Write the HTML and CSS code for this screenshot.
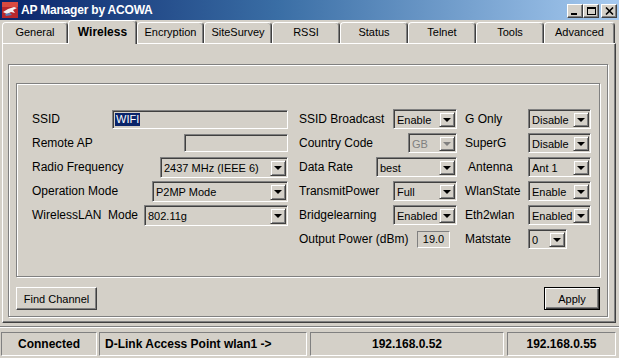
FILE: index.html
```html
<!DOCTYPE html>
<html>
<head>
<meta charset="utf-8">
<title>AP Manager by ACOWA</title>
<link rel="stylesheet" href="styles.css">
</head>
<body>
<div class="title">
	<svg class="ico" width="16" height="16" viewBox="0 0 16 16">
		<rect x="0" y="0" width="16" height="16" fill="#b8282c"/>
		<rect x="0" y="0" width="16" height="5" fill="#d84a40"/>
		<path d="M1 10 L6 7 L12 5 L15 6 L11 8 L13 11 L9 10 L5 12 Z" fill="#f2f2f2"/>
		<path d="M3 12 L8 11 L10 13 L4 14 Z" fill="#5a7fb8"/>
	</svg>
	<h1>AP Manager by ACOWA</h1>
	<div class="wbtns">
		<div class="wbtn"><span class="g-min"></span></div>
		<div class="wbtn"><span class="g-max"></span></div>
		<div class="wbtn wclose">
			<svg width="9" height="8" viewBox="0 0 9 8"><path d="M1 0.5 L8 7.5 M8 0.5 L1 7.5" stroke="#000" stroke-width="1.6"/></svg>
		</div>
	</div>
</div>

<ul class="tabs">
	<li class="t66">General</li>
	<li class="t69 on">Wireless</li>
	<li class="t67">Encryption</li>
	<li class="t68">SiteSurvey</li>
	<li class="t68">RSSI</li>
	<li class="t68">Status</li>
	<li class="t68">Telnet</li>
	<li class="t68">Tools</li>
	<li class="t71">Advanced</li>
</ul>

<div class="panel">
	<div class="outer">
		<div class="inner">
			<!-- left column -->
			<div class="col col-l">
				<div class="row">
					<label>SSID</label>
					<div class="txt w176"><span class="sel">WIFI</span></div>
				</div>
				<div class="row">
					<label>Remote AP</label>
					<div class="txt w104 h18"></div>
				</div>
				<div class="row">
					<label>Radio Frequency</label>
					<div class="combo w128"><span class="val">2437 MHz (IEEE 6)</span><span class="arr"></span></div>
				</div>
				<div class="row">
					<label>Operation Mode</label>
					<div class="combo w136"><span class="val">P2MP Mode</span><span class="arr"></span></div>
				</div>
				<div class="row">
					<label>WirelessLAN&nbsp; Mode</label>
					<div class="combo w144"><span class="val">802.11g</span><span class="arr"></span></div>
				</div>
			</div>
			<!-- middle column -->
			<div class="col col-m">
				<div class="row">
					<label>SSID Broadcast</label>
					<div class="combo w64 sm"><span class="val">Enable</span><span class="arr"></span></div>
				</div>
				<div class="row">
					<label>Country Code</label>
					<div class="combo w49 sm off"><span class="val">GB</span><span class="arr"></span></div>
				</div>
				<div class="row">
					<label>Data Rate</label>
					<div class="combo w81 sm"><span class="val">best</span><span class="arr"></span></div>
				</div>
				<div class="row">
					<label>TransmitPower</label>
					<div class="combo w64 sm"><span class="val">Full</span><span class="arr"></span></div>
				</div>
				<div class="row">
					<label>Bridgelearning</label>
					<div class="combo w64 sm"><span class="val">Enabled</span><span class="arr"></span></div>
				</div>
				<div class="row">
					<label>Output Power (dBm)</label>
					<div class="num">19.0</div>
				</div>
			</div>
			<!-- right column -->
			<div class="col col-r">
				<div class="row">
					<label>G Only</label>
					<div class="combo w63 sm"><span class="val">Disable</span><span class="arr"></span></div>
				</div>
				<div class="row">
					<label>SuperG</label>
					<div class="combo w63 sm"><span class="val">Disable</span><span class="arr"></span></div>
				</div>
				<div class="row">
					<label class="ind">Antenna</label>
					<div class="combo w63 sm"><span class="val">Ant 1</span><span class="arr"></span></div>
				</div>
				<div class="row">
					<label>WlanState</label>
					<div class="combo w63 sm"><span class="val">Enable</span><span class="arr"></span></div>
				</div>
				<div class="row">
					<label>Eth2wlan</label>
					<div class="combo w63 sm"><span class="val">Enabled</span><span class="arr"></span></div>
				</div>
				<div class="row">
					<label>Matstate</label>
					<div class="combo w39 sm"><span class="val">0</span><span class="arr"></span></div>
				</div>
			</div>
		</div>
		<div class="btns">
			<a class="btn find" href="###">Find Channel</a>
			<a class="btn apply" href="###">Apply</a>
		</div>
	</div>
</div>

<div class="status">
	<div class="cell s1">Connected</div>
	<div class="cell s2">D-Link Access Point wlan1 -&gt;</div>
	<div class="cell s3">192.168.0.52</div>
	<div class="cell s4">192.168.0.55</div>
</div>
</body>
</html>
```

FILE: styles.css
```css
*{margin:0;padding:0;box-sizing:border-box;}
li{list-style:none;}
a{text-decoration:none;color:#000;}
body{width:619px;height:358px;overflow:hidden;background:#d4d0c8;color:#000;font:12px "Liberation Sans",Arial,sans-serif;}

/* title bar */
.title{height:20px;display:flex;align-items:center;padding:0 2px;background:linear-gradient(to right,#0a246a,#3a6ea5 45%,#a6caf0);}
.title .ico{margin-right:3px;flex:none;}
.title h1{flex:1;color:#fff;font:bold 12px "Liberation Sans",Arial,sans-serif;letter-spacing:-0.2px;}
.wbtns{display:flex;margin-top:2px;}
.wbtn{width:16px;height:14px;display:flex;align-items:center;justify-content:center;background:#d4d0c8;border:1px solid;border-color:#fff #404040 #404040 #fff;box-shadow:inset -1px -1px #808080;}
.wclose{margin-left:2px;}
.g-min{width:6px;height:2px;background:#000;margin-top:6px;margin-right:2px;}
.g-max{width:9px;height:8px;border:1px solid #000;border-top-width:2px;}

/* tabs */
.tabs{display:flex;align-items:flex-end;height:23px;padding-left:2px;}
.tabs li{height:21px;text-align:center;font-size:11px;line-height:19px;background:#d4d0c8;border:1px solid;border-bottom:none;border-color:#fff #404040 transparent #fff;border-radius:4px 4px 0 0;box-shadow:inset -1px 0 #808080;}
.tabs .on{height:24px;margin-bottom:-1px;position:relative;z-index:1;font-size:12px;font-weight:bold;line-height:22px;}
.t66{width:66px;}
.t67{width:67px;}
.t68{width:68px;}
.t69{width:69px;}
.t71{width:71px;}

/* tab page */
.panel{margin-left:2px;width:614px;height:280px;padding:20px 0 0 5px;border:1px solid;border-color:#fff #404040 #404040 #fff;box-shadow:inset -1px -1px #808080;}
.outer{width:600px;height:253px;padding:18px 7px 0;border:1px solid #808080;box-shadow:inset 1px 1px #fff,1px 1px #fff;}
.inner{display:flex;height:194px;padding:23px 0 0 15px;border:1px solid #808080;box-shadow:inset 1px 1px #fff,1px 1px #fff;}
.col-l{width:256px;margin-right:11px;}
.col-m{width:158px;margin-right:8px;}
.col-r{width:126px;}
.row{height:24px;display:flex;align-items:center;justify-content:space-between;}
.row label{white-space:nowrap;}
.col-r .row{justify-content:flex-start;}
.col-r label{width:63px;}
.col-r .ind{padding-left:3px;}

/* controls */
.txt,.combo,.num{display:flex;align-items:center;height:19px;background:#d4d0c8;border:1px solid;border-color:#808080 #fff #fff #808080;box-shadow:inset 1px 1px #404040;font-size:11px;}
.txt{padding-left:2px;}
.h18{height:18px;}
.sel{background:#0a246a;color:#fff;padding:0 1px;line-height:13px;}
.combo{height:21px;padding:2px 1px 1px 2px;}
.combo.sm{height:20px;}
.combo .val{flex:1;padding-left:1px;white-space:nowrap;overflow:hidden;}
.combo .arr{flex:none;width:16px;height:100%;display:flex;align-items:center;justify-content:center;border:1px solid;border-color:#d4d0c8 #404040 #404040 #d4d0c8;box-shadow:inset 1px 1px #fff,inset -1px -1px #808080;}
.combo .arr:after{content:"";border-top:4px solid #000;border-left:4px solid transparent;border-right:4px solid transparent;}
.combo.off .val{color:#808080;}
.combo.off .arr:after{border-top-color:#808080;}
.num{width:33px;height:17px;margin-right:7px;justify-content:center;box-shadow:none;}
.w39{width:39px;}
.w49{width:49px;}
.w63{width:63px;}
.w64{width:64px;}
.w81{width:81px;}
.w104{width:104px;}
.w128{width:128px;}
.w136{width:136px;}
.w144{width:144px;}
.w176{width:176px;}

/* buttons */
.btns{display:flex;justify-content:space-between;margin-top:10px;}
.btn{display:flex;align-items:center;justify-content:center;height:23px;font-size:11px;background:#d4d0c8;border:1px solid;border-color:#fff #404040 #404040 #fff;box-shadow:inset -1px -1px #808080;}
.find{width:81px;}
.apply{width:56px;border-color:#000;box-shadow:inset 1px 1px #fff,inset -1px -1px #404040,inset -2px -2px #808080;}

/* status bar */
.status{display:flex;height:32px;margin-top:3px;padding:5px 0 0 1px;border-top:1px solid #808080;box-shadow:inset 0 1px #fff;}
.cell{height:24px;display:flex;align-items:center;font-weight:bold;border:1px solid;border-color:#808080 #fff #fff #808080;}
.s1{width:96px;justify-content:center;}
.s2{width:208px;margin-left:2px;padding-left:5px;}
.s3{width:194px;margin-left:3px;justify-content:center;}
.s4{width:109px;margin-left:3px;justify-content:center;}
```
